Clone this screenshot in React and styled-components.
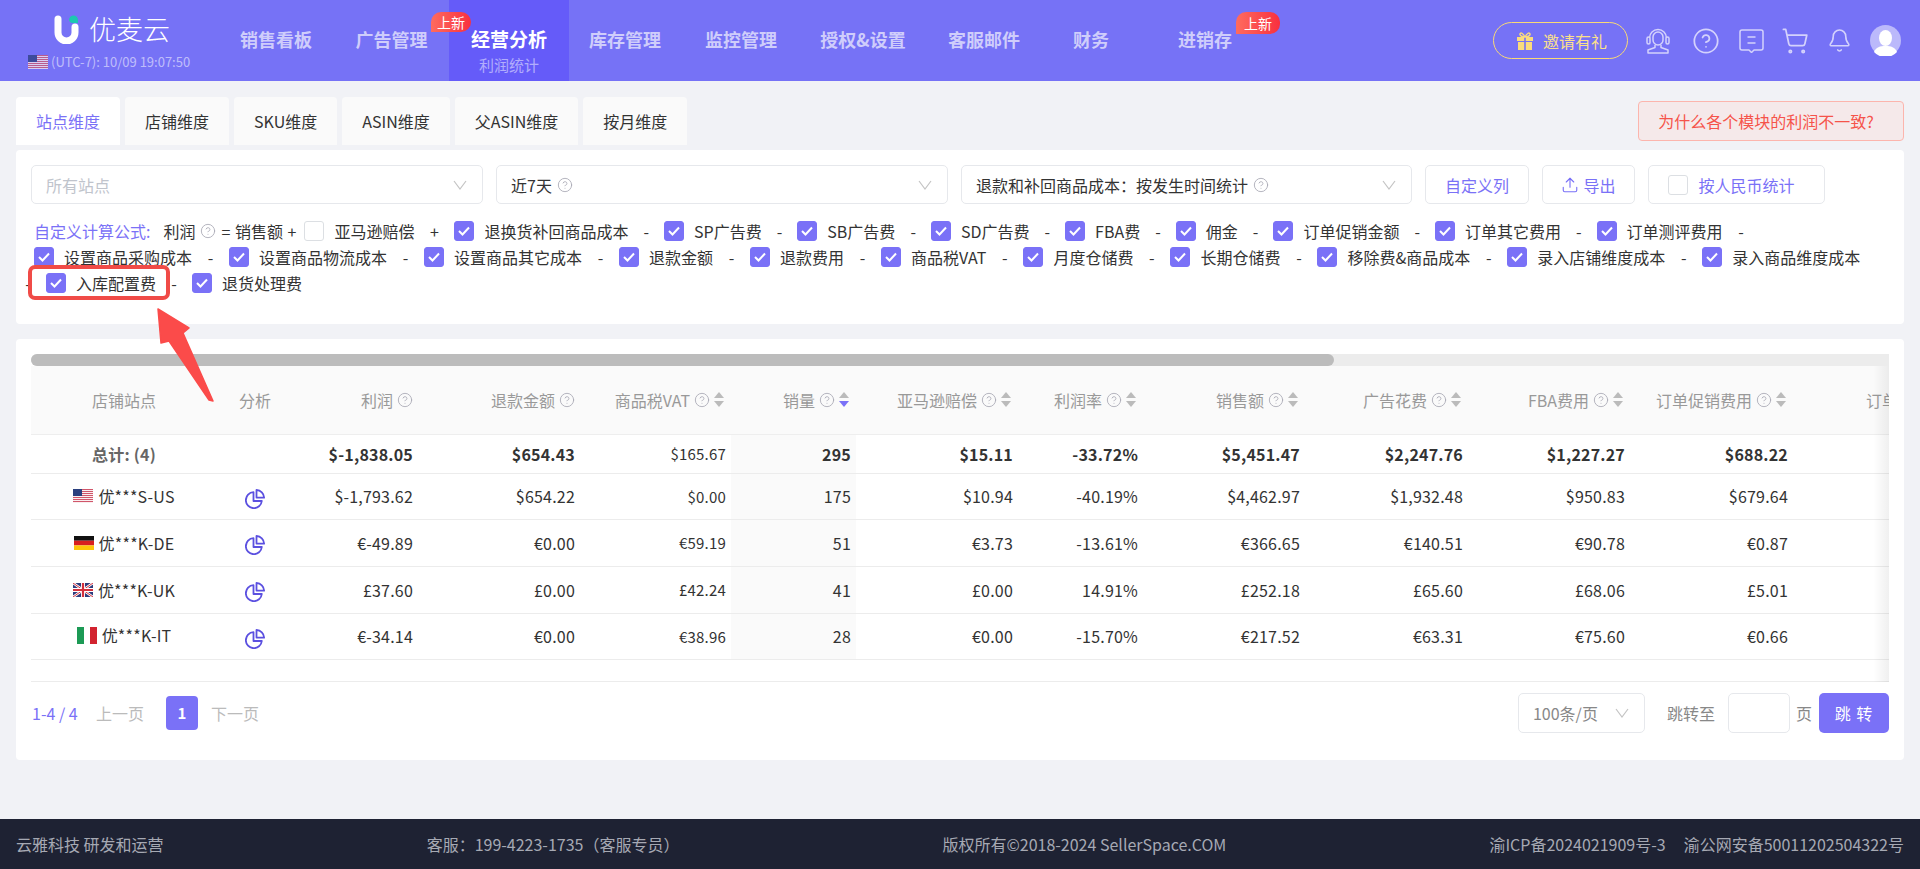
import React from "react";
import styled, { createGlobalStyle } from "styled-components";
import { Bell, CircleHelp, ShoppingCart, Upload } from "lucide-react";

const GlobalStyle = createGlobalStyle`
    html, body {
        margin: 0;
        padding: 0;
        height: 100%;
        overflow: hidden;
    }
    body {
        background: #f1f2f6;
        color: #333;
        font-family: "Noto Sans CJK SC", "Noto Sans", sans-serif;
        font-size: 16px;
    }
    * {
        box-sizing: border-box;
    }
`;

const PRIMARY = "#7a71f7";

const Page = styled.div`
    position: relative;
    display: flex;
    flex-direction: column;
    height: 869px;
    overflow: hidden;
`;

// top bar
const TopBar = styled.header`
    display: flex;
    align-items: stretch;
    height: 81px;
    background: #7672f6;
    flex-shrink: 0;
`;

const Brand = styled.div`
    width: 218px;
    padding: 15px 0 0 28px;
    flex-shrink: 0;
`;

const LogoRow = styled.div`
    display: flex;
    align-items: center;
    height: 28px;
    padding-left: 26px;
    gap: 10px;
`;

const LogoText = styled.span`
    color: #fff;
    font-size: 27px;
    line-height: 28px;
    font-weight: 300;
`;

const ClockRow = styled.div`
    display: flex;
    align-items: center;
    gap: 3px;
    margin-top: 9px;
    color: rgba(255, 255, 255, 0.55);
    font-size: 13px;
    line-height: 20px;
    white-space: nowrap;
`;

const NavList = styled.nav`
    display: flex;
`;

const NavItem = styled.div`
    position: relative;
    width: ${(p) => p.$width}px;
    padding-top: 26px;
    text-align: center;
    background: ${(p) => (p.$active ? "#655bf9" : "transparent")};
`;

const NavLabel = styled.div`
    color: ${(p) => (p.$active ? "#fff" : "#cfcdfb")};
    font-size: ${(p) => (p.$active ? 19 : 18)}px;
    font-weight: 700;
    line-height: 26px;
    white-space: nowrap;
`;

const NavSub = styled.div`
    margin-top: 2px;
    color: rgba(255, 255, 255, 0.5);
    font-size: 15px;
    line-height: 22px;
`;

const NewBadge = styled.span`
    position: absolute;
    z-index: 1;
    top: 12px;
    right: ${(p) => p.$right}px;
    width: ${(p) => p.$w}px;
    height: ${(p) => p.$h}px;
    border-radius: 10px 10px 10px 0;
    background: linear-gradient(90deg, #ff6b5e, #f8303f);
    color: #fff;
    font-size: 14px;
    line-height: ${(p) => p.$h}px;
    text-align: center;
`;

const TopRight = styled.div`
    display: flex;
    align-items: center;
    margin-left: auto;
    padding-right: 19px;
`;

const InviteButton = styled.div`
    display: flex;
    align-items: center;
    gap: 10px;
    width: 135px;
    height: 37px;
    margin-right: 18px;
    padding-left: 23px;
    border: 1px solid #f9d976;
    border-radius: 19px;
    color: #fbe08a;
    font-size: 16px;
    white-space: nowrap;
`;

const IconSlot = styled.span`
    display: flex;
    align-items: center;
    justify-content: center;
    width: ${(p) => p.$w}px;
    margin-right: ${(p) => p.$gap}px;
    color: #d4d2fc;
`;

// tabs
const Main = styled.main`
    flex: 1;
    padding: 16px 16px 0;
`;

const TabRow = styled.div`
    display: flex;
    justify-content: space-between;
    align-items: flex-start;
`;

const Tabs = styled.div`
    display: flex;
    gap: 5px;
`;

const Tab = styled.div`
    height: 48px;
    padding: 0 20px;
    border-radius: 4px 4px 0 0;
    background: ${(p) => (p.$active ? "#fff" : "#fafafa")};
    color: ${(p) => (p.$active ? PRIMARY : "#333")};
    font-size: 16px;
    line-height: 48px;
    white-space: nowrap;
`;

const WarnButton = styled.div`
    width: 266px;
    height: 40px;
    margin-top: 4px;
    padding-right: 10px;
    border: 1px solid #fcb5ad;
    border-radius: 4px;
    background: #f5e9ea;
    color: #f5544a;
    font-size: 16px;
    line-height: 38px;
    text-align: center;
    white-space: nowrap;
`;

// filters
const Card = styled.section`
    margin-top: ${(p) => p.$top}px;
    padding: ${(p) => p.$padding};
    border-radius: 4px;
    background: #fff;
`;

const FilterRow = styled.div`
    display: flex;
    gap: 13px;
`;

const Select = styled.div`
    display: flex;
    align-items: center;
    justify-content: space-between;
    flex-shrink: 0;
    width: ${(p) => p.$w}px;
    height: ${(p) => p.$h || 39}px;
    padding: 0 15px 0 14px;
    border: 1px solid #e6e8ec;
    border-radius: 5px;
    color: ${(p) => p.$color || "#333"};
    font-size: 16px;
    white-space: nowrap;
    background: #fff;
`;

const SelectText = styled.span`
    display: flex;
    align-items: center;
    gap: 5px;
`;

const OutlineButton = styled.div`
    display: flex;
    align-items: center;
    justify-content: center;
    gap: ${(p) => p.$gap || 0}px;
    width: ${(p) => p.$w}px;
    height: 39px;
    padding-right: ${(p) => p.$pr || 0}px;
    border: 1px solid #e6e8ec;
    border-radius: 5px;
    color: ${PRIMARY};
    font-size: 16px;
    white-space: nowrap;
`;

const Formula = styled.div`
    display: flex;
    flex-wrap: wrap;
    align-items: center;
    row-gap: 6px;
    width: 1836px;
    margin-top: 17px;
    padding-left: 3px;
    font-size: 16px;
    line-height: 20px;
`;

const FormulaTitle = styled.span`
    margin-right: 13px;
    color: ${PRIMARY};
    white-space: nowrap;
`;

const FormulaText = styled.span`
    display: flex;
    align-items: center;
    gap: ${(p) => p.$gap || 0}px;
    margin-right: ${(p) => p.$right || 0}px;
    word-spacing: 1px;
    white-space: pre;
`;

const Term = styled.span`
    position: relative;
    display: flex;
    align-items: center;
    gap: 10px;
    white-space: nowrap;
`;

const Sep = styled.span`
    width: ${(p) => p.$w || 36}px;
    margin-left: ${(p) => p.$shift || 0}px;
    text-align: center;
    color: #333;
`;

const Check = styled.span`
    display: flex;
    align-items: center;
    justify-content: center;
    flex-shrink: 0;
    width: 20px;
    height: 20px;
    border-radius: 3px;
    border: 1px solid ${(p) => (p.$on ? PRIMARY : "#dcdfe3")};
    background: ${(p) => (p.$on ? PRIMARY : "#fff")};
`;

const RedFrame = styled.span`
    position: absolute;
    top: -8px;
    right: -14px;
    bottom: -7px;
    left: -18px;
    border: 4px solid #f04b47;
    border-radius: 7px;
    pointer-events: none;
`;

const RedArrow = styled.svg`
    position: absolute;
    top: 300px;
    left: 150px;
    z-index: 5;
`;

// table
const ScrollTrack = styled.div`
    height: 12px;
    border-radius: 6px 0 0 6px;
    background: #ececec;
`;

const ScrollThumb = styled.div`
    width: 1303px;
    height: 12px;
    border-radius: 6px;
    background: #bcbcbc;
`;

const TableBox = styled.div`
    position: relative;
    width: 1858px;
    overflow: hidden;
`;

const EdgeShadow = styled.div`
    position: absolute;
    top: 0;
    right: 0;
    bottom: 0;
    width: 16px;
    background: linear-gradient(90deg, rgba(0, 0, 0, 0), rgba(0, 0, 0, 0.06));
    pointer-events: none;
`;

const Table = styled.table`
    width: 1972px;
    table-layout: fixed;
    border-collapse: collapse;
`;

const Th = styled.th`
    height: 68px;
    padding: 0 5px;
    background: #fafafa;
    color: #999;
    font-size: 16px;
    font-weight: 400;
    text-align: ${(p) => p.$align};
    white-space: nowrap;
    border-bottom: 1px solid #eee;
`;

const ThInner = styled.span`
    display: inline-flex;
    align-items: center;
    gap: 4px;
    margin-right: ${(p) => (p.$sort ? 2 : 0)}px;
`;

const Td = styled.td`
    height: ${(p) => p.$h}px;
    padding: 0 5px;
    border-bottom: 1px solid #ececec;
    background: ${(p) => (p.$shade ? "#fafafa" : "transparent")};
    color: #333;
    font-size: ${(p) => (p.$small ? 15 : 16)}px;
    font-weight: ${(p) => (p.$strong ? 700 : 400)};
    letter-spacing: 0.2px;
    text-align: ${(p) => p.$align};
    white-space: nowrap;
`;

const StoreName = styled.span`
    display: inline-flex;
    align-items: center;
    gap: 5px;
`;

const TotalLabel = styled.span`
    color: #666;
`;

const PieSlot = styled.span`
    display: inline-flex;
    margin-top: 10px;
`;

const BlankRow = styled.div`
    height: 22px;
    border-bottom: 1px solid #ececec;
`;

const SortBox = styled.span`
    display: inline-flex;
    flex-direction: column;
    gap: 3px;
`;

const Caret = styled.i`
    display: block;
    width: 0;
    height: 0;
    border-left: 5px solid transparent;
    border-right: 5px solid transparent;
    border-${(p) => (p.$up ? "bottom" : "top")}: 6px solid ${(p) => (p.$on ? PRIMARY : "#bbb")};
`;

// pagination
const Pager = styled.div`
    display: flex;
    align-items: center;
    justify-content: space-between;
    margin-top: 11px;
`;

const PagerLeft = styled.div`
    display: flex;
    align-items: center;
    margin-left: 1px;
`;

const PagerCount = styled.span`
    width: 64px;
    color: ${PRIMARY};
    font-size: 16px;
    white-space: nowrap;
`;

const PagerLink = styled.span`
    color: #bbb;
    font-size: 16px;
`;

const PageNumber = styled.span`
    width: 32px;
    height: 34px;
    margin: 0 13px 0 22px;
    border-radius: 4px;
    background: ${PRIMARY};
    color: #fff;
    font-size: 15px;
    font-weight: 700;
    line-height: 34px;
    text-align: center;
`;

const PagerRight = styled.div`
    display: flex;
    align-items: center;
    color: #888;
    font-size: 16px;
`;

const PageInput = styled.div`
    width: 62px;
    height: 40px;
    margin: 0 6px 0 13px;
    border: 1px solid #e6e8ec;
    border-radius: 5px;
`;

const JumpLabel = styled.span`
    margin-left: 22px;
`;

const JumpButton = styled.div`
    width: 70px;
    height: 40px;
    margin-left: 7px;
    border-radius: 5px;
    background: ${PRIMARY};
    color: #fff;
    font-size: 16px;
    letter-spacing: 1px;
    line-height: 40px;
    text-align: center;
`;

// footer
const Footer = styled.footer`
    display: flex;
    align-items: center;
    justify-content: space-between;
    height: 50px;
    padding: 0 16px;
    background: #1e2233;
    color: #a6a9b3;
    font-size: 16px;
    flex-shrink: 0;
`;

const FooterRight = styled.div`
    display: flex;
    gap: 18px;
`;

// watermark
const Watermark = styled.div`
    position: absolute;
    inset: 0;
    display: grid;
    grid-template-columns: repeat(11, 164px);
    grid-auto-rows: 84px;
    overflow: hidden;
    pointer-events: none;
    z-index: 4;
`;

const WatermarkText = styled.span`
    justify-self: center;
    align-self: center;
    color: rgba(40, 40, 60, 0.025);
    font-size: 15px;
    transform: translateX(${(p) => (p.$odd ? 82 : 0)}px) rotate(-25deg);
`;

const HelpIcon = ({ size = 16 }) => (
    <CircleHelp size={size} strokeWidth={1.3} color="#a9a9b5" style={{ flexShrink: 0 }} />
);

const Chevron = () => (
    <svg width="14" height="10" viewBox="0 0 14 10" fill="none">
        <path d="M1 1l6 8 6-8" stroke="#c4c4c4" strokeWidth="1.2" />
    </svg>
);

const Tick = () => (
    <svg width="14" height="12" viewBox="0 0 14 12" fill="none">
        <path d="M2 6l3.5 3.5L12 2.5" stroke="#fff" strokeWidth="2" />
    </svg>
);

const Box = ({ on }) => <Check $on={on}>{on && <Tick />}</Check>;

const Logo = () => (
    <svg width="25" height="29" viewBox="0 0 25 29">
        <path d="M4 4v13.5a8.5 8.5 0 0 0 17 0V12" fill="none" stroke="#fff" strokeWidth="7" strokeLinecap="round" />
        <path d="M15 5a4.5 4.5 0 0 1 9 0v3h-5a4 4 0 0 1-4-3z" fill="#1cc8b0" />
    </svg>
);

const UsFlag = ({ dim }) => (
    <svg width="20" height="14" viewBox="0 0 20 14" opacity={dim ? 0.75 : 1}>
        <rect width="20" height="14" fill="#fff" />
        {[0, 2, 4, 6, 8, 10, 12].map((y) => (
            <rect key={y} y={y} width="20" height="1.1" fill="#d0566a" />
        ))}
        <rect width="9" height="7" fill="#2a3f7e" />
    </svg>
);

const DeFlag = () => (
    <svg width="20" height="14" viewBox="0 0 20 14">
        <rect width="20" height="4.7" fill="#111" />
        <rect y="4.7" width="20" height="4.7" fill="#d8201f" />
        <rect y="9.4" width="20" height="4.6" fill="#fdc609" />
    </svg>
);

const UkFlag = () => (
    <svg width="20" height="14" viewBox="0 0 20 14">
        <rect width="20" height="14" fill="#2c3b7c" />
        <path d="M0 0l20 14M20 0L0 14" stroke="#fff" strokeWidth="2.6" />
        <path d="M0 0l20 14M20 0L0 14" stroke="#d32f3c" strokeWidth="1" />
        <path d="M10 0v14M0 7h20" stroke="#fff" strokeWidth="4" />
        <path d="M10 0v14M0 7h20" stroke="#d32f3c" strokeWidth="2.2" />
    </svg>
);

const ItFlag = () => (
    <svg width="20" height="17" viewBox="0 0 20 17">
        <rect width="7" height="17" fill="#1c9a55" />
        <rect x="7" width="6" height="17" fill="#fff" />
        <rect x="13" width="7" height="17" fill="#d2232f" />
    </svg>
);

const Pie = () => (
    <svg width="20" height="20" viewBox="0 0 20 20" fill="none" stroke="#5b50e0" strokeWidth="1.8" strokeLinejoin="round">
        <path d="M8.5 3.2a8 8 0 1 0 8.3 8.8H8.5z" />
        <path d="M11.5 1a7.8 7.8 0 0 1 7.6 7.6h-7.6z" />
    </svg>
);

const Gift = () => (
    <svg width="16" height="18" viewBox="0 0 16 18" fill="#fbdc7c">
        <path d="M0 5h7.2v4H0zM8.8 5H16v4H8.8zM1 10h6.2v8H1zM8.8 10H15v8H8.8z" />
        <path d="M8 5C6 1 3.5 0 3 2s3 3 5 3zM8 5c2-4 4.5-5 5-3s-3 3-5 3z" fill="none" stroke="#fbdc7c" strokeWidth="1.4" />
    </svg>
);

const Headset = () => (
    <svg width="24" height="26" viewBox="0 0 24 26" fill="none" stroke="currentColor" strokeWidth="1.5" strokeLinejoin="round">
        <path d="M3.5 10a8.5 8.5 0 0 1 17 0" />
        <rect x="1" y="9" width="3" height="7" rx="1.5" />
        <rect x="20" y="9" width="3" height="7" rx="1.5" />
        <path d="M7 9a5 5 0 0 1 10 0v3a5 5 0 0 1-10 0z" />
        <path d="M9 17v2.5L2 22v3h20v-3l-7-2.5V17" />
    </svg>
);

const Chat = () => (
    <svg width="25" height="24" viewBox="0 0 25 24" fill="none" stroke="currentColor" strokeWidth="1.5" strokeLinejoin="round">
        <path d="M3 1h19a2 2 0 0 1 2 2v16a2 2 0 0 1-2 2h-7l-2.5 2.5L10 21H3a2 2 0 0 1-2-2V3a2 2 0 0 1 2-2z" />
        <path d="M8.5 8h8M8.5 14h8" />
    </svg>
);

const Avatar = () => (
    <svg width="31" height="31" viewBox="0 0 31 31">
        <circle cx="15.5" cy="15.5" r="15.5" fill="rgba(255,255,255,0.5)" />
        <ellipse cx="15.5" cy="13" rx="6.5" ry="8" fill="#fff" />
        <path d="M4 27c2-5 6-6 11.5-6S25 22 27 27a15.5 15.5 0 0 1-23 0z" fill="#fff" />
    </svg>
);

const navItems = [
    { label: "销售看板", width: 116 },
    { label: "广告管理", width: 115, badge: { right: -22, w: 40, h: 20 } },
    { label: "经营分析", width: 120, active: true, sub: "利润统计" },
    { label: "库存管理", width: 112 },
    { label: "监控管理", width: 120 },
    { label: "授权&设置", width: 124 },
    { label: "客服邮件", width: 118 },
    { label: "财务", width: 96 },
    { label: "进销存", width: 132, badge: { right: -9, w: 44, h: 22 } },
];

const tabs = ["站点维度", "店铺维度", "SKU维度", "ASIN维度", "父ASIN维度", "按月维度"];

const termsRowOne = ["SP广告费", "SB广告费", "SD广告费", "FBA费", "佣金", "订单促销金额", "订单其它费用", "订单测评费用"];

const termsRowTwo = ["设置商品采购成本", "设置商品物流成本", "设置商品其它成本", "退款金额", "退款费用", "商品税VAT", "月度仓储费", "长期仓储费",
    "移除费&商品成本", "录入店铺维度成本", "录入商品维度成本"];

const columns = [
    { label: "店铺站点", width: 186, align: "center" },
    { label: "分析", width: 76, align: "center" },
    { label: "利润", width: 125, help: true },
    { label: "退款金额", width: 162, help: true },
    { label: "商品税VAT", width: 151, help: true, sort: true },
    { label: "销量", width: 125, help: true, sort: "down" },
    { label: "亚马逊赔偿", width: 162, help: true, sort: true },
    { label: "利润率", width: 125, help: true, sort: true },
    { label: "销售额", width: 162, help: true, sort: true },
    { label: "广告花费", width: 163, help: true, sort: true },
    { label: "FBA费用", width: 162, help: true, sort: true },
    { label: "订单促销费用", width: 163, help: true, sort: true },
    { label: "订单其它费用", width: 210, help: true, sort: true },
];

const rows = [
    { flag: <UsFlag />, name: "优***S-US", h: 46, values: ["$-1,793.62", "$654.22", "$0.00", "175", "$10.94", "-40.19%", "$4,462.97", "$1,932.48", "$950.83", "$679.64"] },
    { flag: <DeFlag />, name: "优***K-DE", h: 47, values: ["€-49.89", "€0.00", "€59.19", "51", "€3.73", "-13.61%", "€366.65", "€140.51", "€90.78", "€0.87"] },
    { flag: <UkFlag />, name: "优***K-UK", h: 47, values: ["£37.60", "£0.00", "£42.24", "41", "£0.00", "14.91%", "£252.18", "£65.60", "£68.06", "£5.01"] },
    { flag: <ItFlag />, name: "优***K-IT", h: 46, values: ["€-34.14", "€0.00", "€38.96", "28", "€0.00", "-15.70%", "€217.52", "€63.31", "€75.60", "€0.66"] },
];

const totals = ["$-1,838.05", "$654.43", "$165.67", "295", "$15.11", "-33.72%", "$5,451.47", "$2,247.76", "$1,227.27", "$688.22"];

function SortIcon({ down }) {
    return (
        <SortBox>
            <Caret $up />
            <Caret $on={down} />
        </SortBox>
    );
}

function App() {
    return (
        <Page>
            <GlobalStyle />
            <TopBar>
                <Brand>
                    <LogoRow>
                        <Logo />
                        <LogoText>优麦云</LogoText>
                    </LogoRow>
                    <ClockRow>
                        <UsFlag dim />
                        (UTC-7): 10/09 19:07:50
                    </ClockRow>
                </Brand>
                <NavList>
                    {navItems.map((item) => (
                        <NavItem key={item.label} $width={item.width} $active={item.active}>
                            <NavLabel $active={item.active}>{item.label}</NavLabel>
                            {item.sub && <NavSub>{item.sub}</NavSub>}
                            {item.badge && (
                                <NewBadge $right={item.badge.right} $w={item.badge.w} $h={item.badge.h}>上新</NewBadge>
                            )}
                        </NavItem>
                    ))}
                </NavList>
                <TopRight>
                    <InviteButton>
                        <Gift />
                        邀请有礼
                    </InviteButton>
                    <IconSlot $w={24} $gap={22}><Headset /></IconSlot>
                    <IconSlot $w={28} $gap={19}><CircleHelp size={28} strokeWidth={1.5} /></IconSlot>
                    <IconSlot $w={25} $gap={17}><Chat /></IconSlot>
                    <IconSlot $w={28} $gap={18}><ShoppingCart size={28} strokeWidth={1.5} /></IconSlot>
                    <IconSlot $w={25} $gap={18}><Bell size={25} strokeWidth={1.5} /></IconSlot>
                    <Avatar />
                </TopRight>
            </TopBar>

            <Main>
                <TabRow>
                    <Tabs>
                        {tabs.map((t, i) => (
                            <Tab key={t} $active={i === 0}>{t}</Tab>
                        ))}
                    </Tabs>
                    <WarnButton>为什么各个模块的利润不一致?</WarnButton>
                </TabRow>

                <Card $top={5} $padding="15px 15px 31px">
                    <FilterRow>
                        <Select $w={452} $color="#c0c4cc">所有站点<Chevron /></Select>
                        <Select $w={452}>
                            <SelectText>近7天 <HelpIcon /></SelectText>
                            <Chevron />
                        </Select>
                        <Select $w={451}>
                            <SelectText>退款和补回商品成本：按发生时间统计 <HelpIcon /></SelectText>
                            <Chevron />
                        </Select>
                        <OutlineButton $w={104}>自定义列</OutlineButton>
                        <OutlineButton $w={93} $gap={4}><Upload size={18} strokeWidth={1.5} />导出</OutlineButton>
                        <OutlineButton $w={177} $gap={10} $pr={10}><Box />按人民币统计</OutlineButton>
                    </FilterRow>

                    <Formula>
                        <FormulaTitle>自定义计算公式:</FormulaTitle>
                        <FormulaText $gap={5} $right={5}>利润<HelpIcon /></FormulaText>
                        <FormulaText $right={8}>= 销售额 +</FormulaText>
                        <Term><Box />亚马逊赔偿</Term>
                        <Sep $w={40}>+</Sep>
                        <Term><Box on />退换货补回商品成本</Term>
                        {termsRowOne.map((t) => (
                            <React.Fragment key={t}>
                                <Sep $w={35.6}>-</Sep>
                                <Term><Box on />{t}</Term>
                            </React.Fragment>
                        ))}
                        {termsRowTwo.map((t) => (
                            <React.Fragment key={t}>
                                <Sep $w={37}>-</Sep>
                                <Term><Box on />{t}</Term>
                            </React.Fragment>
                        ))}
                        <Sep $shift={-24}>-</Sep>
                        <Term><Box on />入库配置费<RedFrame /></Term>
                        <Sep>-</Sep>
                        <Term><Box on />退货处理费</Term>
                    </Formula>
                </Card>

                <Card $top={15} $padding="15px 15px 27px">
                    <ScrollTrack><ScrollThumb /></ScrollTrack>
                    <TableBox>
                        <Table>
                            <colgroup>
                                {columns.map((c) => (
                                    <col key={c.label} style={{ width: c.width }} />
                                ))}
                            </colgroup>
                            <thead>
                                <tr>
                                    {columns.map((c) => (
                                        <Th key={c.label} $align={c.align || "right"}>
                                            <ThInner $sort={c.sort}>
                                                {c.label}
                                                {c.help && <HelpIcon />}
                                                {c.sort && <SortIcon down={c.sort === "down"} />}
                                            </ThInner>
                                        </Th>
                                    ))}
                                </tr>
                            </thead>
                            <tbody>
                                <tr>
                                    <Td $h={39} $align="center" $strong><TotalLabel>总计: (4)</TotalLabel></Td>
                                    <Td $h={39} />
                                    {totals.map((v, i) => (
                                        <Td key={i} $h={39} $align="right" $strong={i !== 2} $small={i === 2} $shade={i === 3}>{v}</Td>
                                    ))}
                                    <Td $h={39} />
                                </tr>
                                {rows.map((r) => (
                                    <tr key={r.name}>
                                        <Td $h={r.h} $align="center">
                                            <StoreName>{r.flag}{r.name}</StoreName>
                                        </Td>
                                        <Td $h={r.h} $align="center"><PieSlot><Pie /></PieSlot></Td>
                                        {r.values.map((v, i) => (
                                            <Td key={i} $h={r.h} $align="right" $small={i === 2} $shade={i === 3}>{v}</Td>
                                        ))}
                                        <Td $h={r.h} />
                                    </tr>
                                ))}
                            </tbody>
                        </Table>
                        <BlankRow />
                        <EdgeShadow />
                    </TableBox>

                    <Pager>
                        <PagerLeft>
                            <PagerCount>1-4 / 4</PagerCount>
                            <PagerLink>上一页</PagerLink>
                            <PageNumber>1</PageNumber>
                            <PagerLink>下一页</PagerLink>
                        </PagerLeft>
                        <PagerRight>
                            <Select $w={127} $h={40} $color="#888">100条/页<Chevron /></Select>
                            <JumpLabel>跳转至</JumpLabel>
                            <PageInput />
                            页
                            <JumpButton>跳 转</JumpButton>
                        </PagerRight>
                    </Pager>
                </Card>
            </Main>

            <Footer>
                <span>云雅科技 研发和运营</span>
                <span>客服：199-4223-1735（客服专员）</span>
                <span>版权所有©2018-2024 SellerSpace.COM</span>
                <FooterRight>
                    <span>渝ICP备2024021909号-3</span>
                    <span>渝公网安备50011202504322号</span>
                </FooterRight>
            </Footer>

            <RedArrow width="70" height="105" viewBox="150 300 70 105">
                <path d="M158 309L189 328L183 333L213 401L209 400L169 341L161 343Z" fill="#fb4b4a" stroke="#fb4b4a" strokeWidth="1.5" strokeLinejoin="round" />
            </RedArrow>

            <Watermark>
                {Array.from({ length: 110 }).map((_, i) => (
                    <WatermarkText key={i} $odd={Math.floor(i / 11) % 2 === 1}>17185</WatermarkText>
                ))}
            </Watermark>
        </Page>
    );
}

export default App;
